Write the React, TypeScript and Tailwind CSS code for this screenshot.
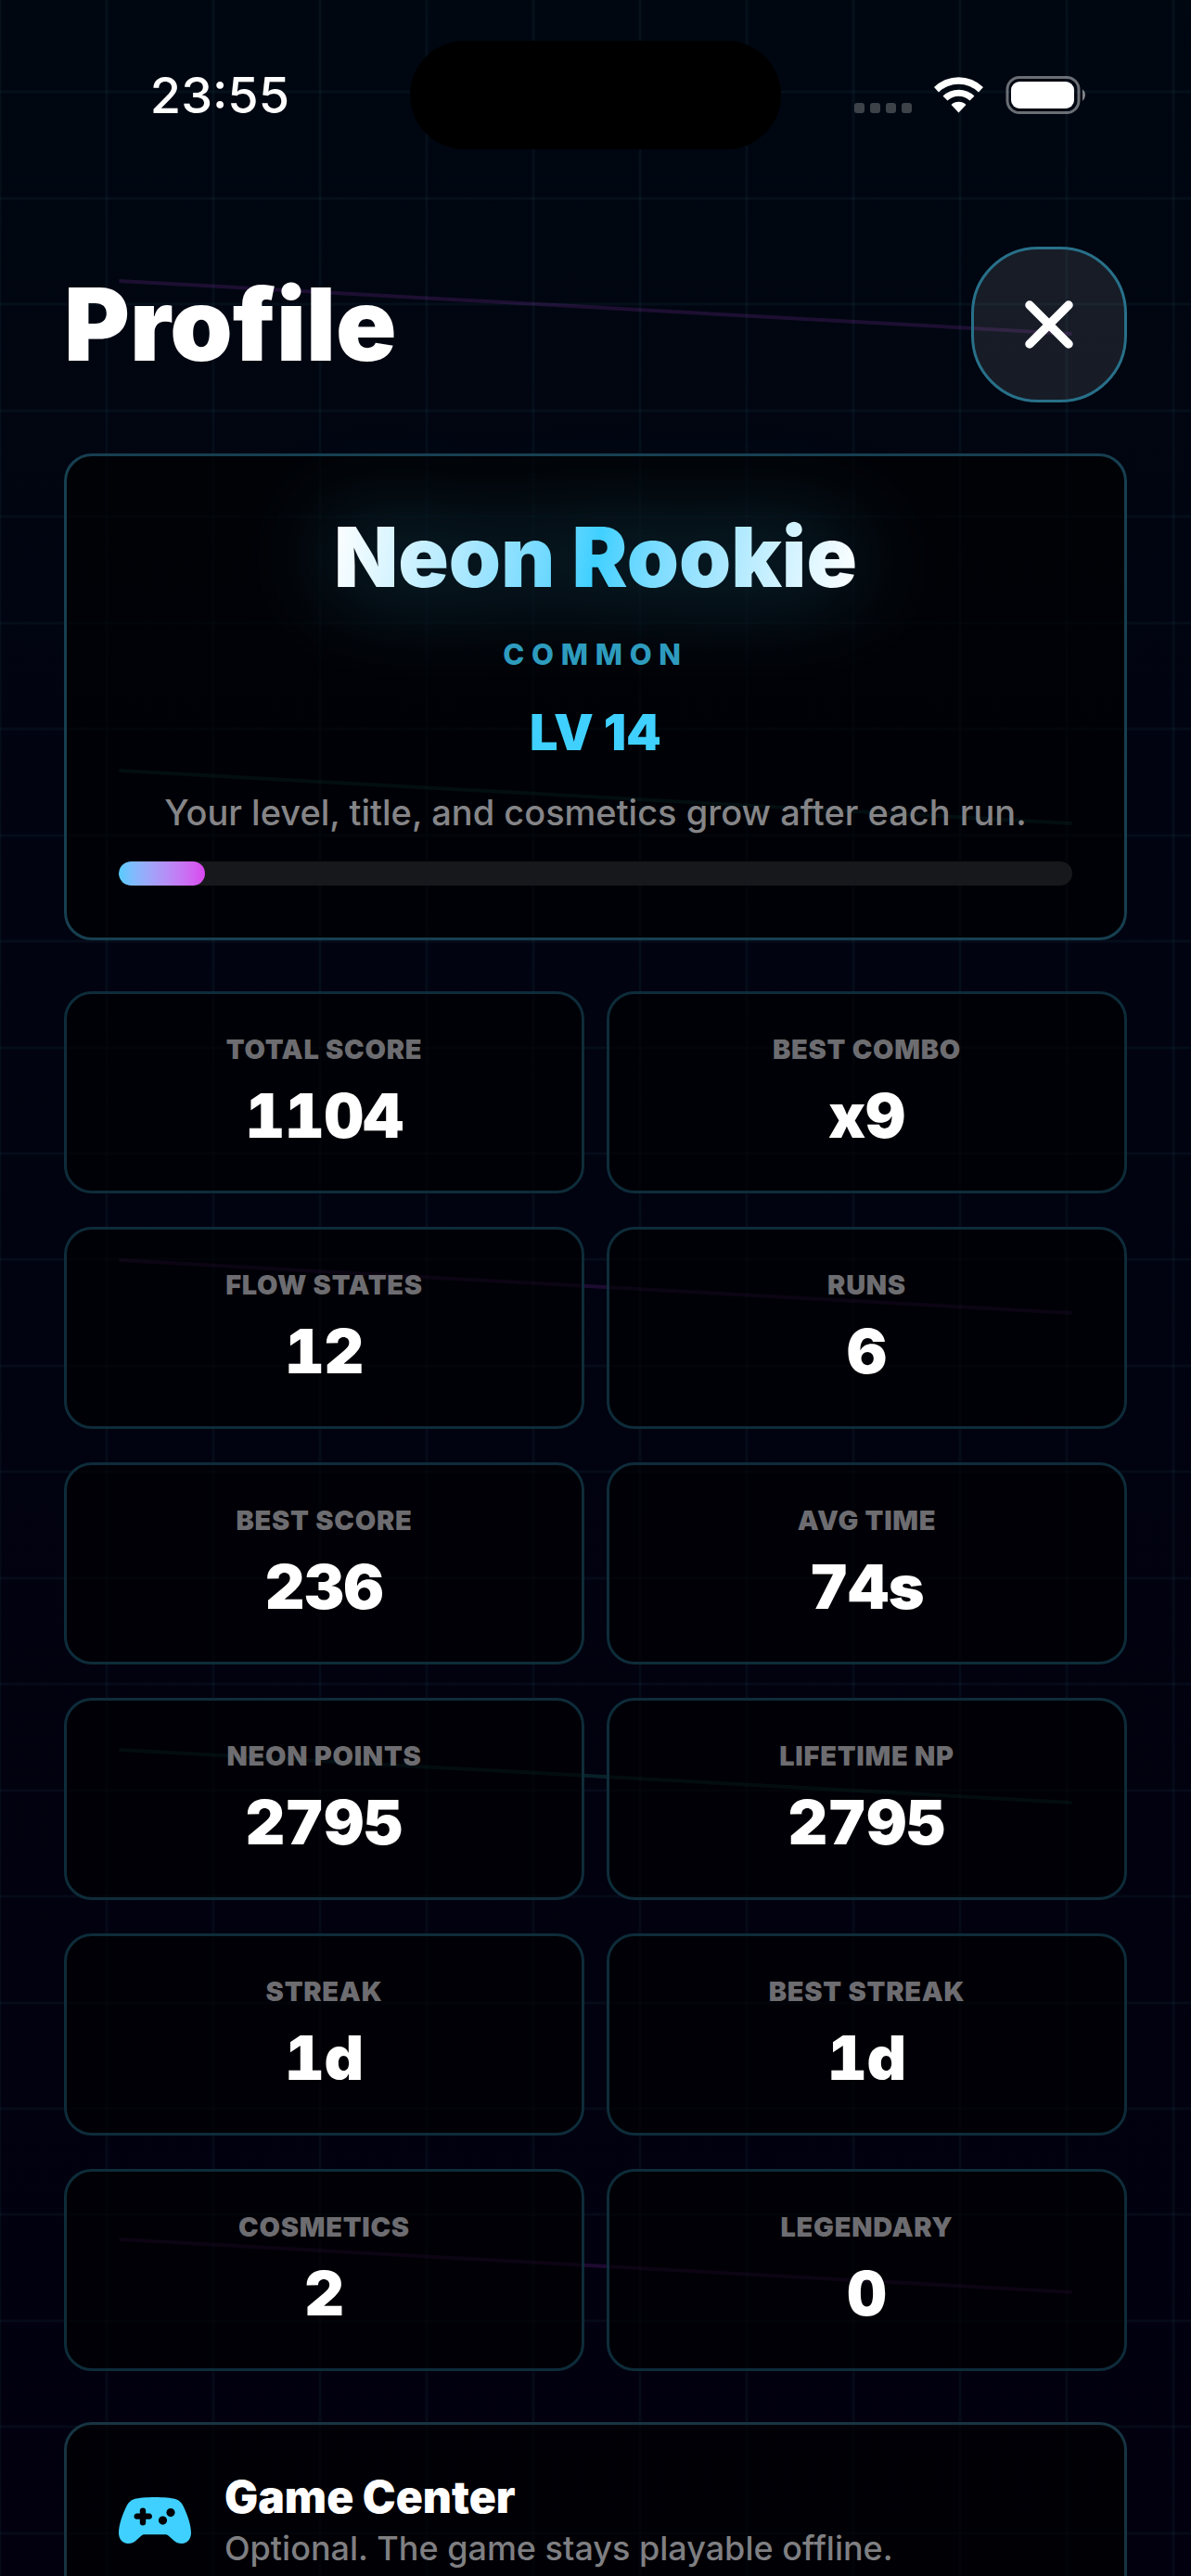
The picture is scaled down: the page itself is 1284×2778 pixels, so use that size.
type Stat = { label: string; value: string };

const STATS: Stat[] = [
  { label: "TOTAL SCORE", value: "1104" },
  { label: "BEST COMBO", value: "x9" },
  { label: "FLOW STATES", value: "12" },
  { label: "RUNS", value: "6" },
  { label: "BEST SCORE", value: "236" },
  { label: "AVG TIME", value: "74s" },
  { label: "NEON POINTS", value: "2795" },
  { label: "LIFETIME NP", value: "2795" },
  { label: "STREAK", value: "1d" },
  { label: "BEST STREAK", value: "1d" },
  { label: "COSMETICS", value: "2" },
  { label: "LEGENDARY", value: "0" },
];

const LEVEL_PROGRESS = 9;

// Faint grid with five slanted beams behind the whole screen
function NeonBackdrop() {
  const columns = Array.from({ length: 12 }, (_, i) => i * 115);
  const rows = Array.from({ length: 25 }, (_, i) => Math.round(i * 114.45 - 15));
  const beams = Array.from({ length: 5 }, (_, i) => 303 + i * 528);

  return (
    <svg className="absolute inset-0 h-full w-full" aria-hidden="true">
      {columns.map((x) => (
        <line key={x} x1={x} x2={x} y1="0" y2="100%" stroke="#5cc8dc" strokeOpacity="0.05" strokeWidth="3" />
      ))}
      {rows.map((y) => (
        <line key={y} x1="0" x2="100%" y1={y} y2={y} stroke="#5cc8dc" strokeOpacity="0.05" strokeWidth="3" />
      ))}
      {beams.map((y, i) => (
        <line
          key={y}
          x1="10%"
          x2="90%"
          y1={y}
          y2={y + 57}
          stroke={i % 2 === 0 ? "#c046f0" : "#2dd4bf"}
          strokeOpacity="0.15"
          strokeWidth="4"
        />
      ))}
    </svg>
  );
}

function StatusBar() {
  return (
    <div className="grid grid-cols-[1fr_400px_1fr] items-center pt-11">
      <time className="pl-8 text-center text-[54px] leading-[60px] font-medium">23:55</time>
      <div className="h-[117px] rounded-full bg-black" />
      <div className="flex items-center justify-center pr-8">
        <svg width="252" height="42" viewBox="0 0 252 42" fill="white" aria-hidden="true">
          {[0, 17, 34, 51].map((x) => (
            <rect key={x} x={x} y="29" width="11" height="11" rx="3" fillOpacity="0.24" />
          ))}
          <path d="M86 12A38 38 0 0 1 139 12L134 17.500A30.500 30.500 0 0 0 91 17.500Z" />
          <path d="M95.500 21.500A24.500 24.500 0 0 1 129.500 21.500L124.500 26.500A17.500 17.500 0 0 0 100.500 26.500Z" />
          <path d="M104.500 31A11.500 11.500 0 0 1 120.500 31L112.500 39.500Z" />
          <rect x="165" y="1.500" width="77" height="38" rx="13" fill="none" stroke="white" strokeOpacity="0.42" strokeWidth="3" />
          <rect x="169" y="6" width="68" height="29" rx="9" />
          <path d="M246 14a8.500 8.500 0 0 1 0 13Z" fillOpacity="0.5" />
        </svg>
      </div>
    </div>
  );
}

function ControllerIcon() {
  return (
    <svg width="78" height="50" viewBox="0 0 78 50" className="shrink-0" aria-hidden="true">
      <path
        fill="#3fd0ff"
        fillRule="evenodd"
        d="M39 0C48 0 57 0.800 61 2C65 3.200 67.500 5.500 69.500 9.500C74 18.500 78 30 78 38.500C78 45 74 50 68 50C64 50 61 48.500 58 45.500L53.500 41.500C52.500 40.500 51.500 40.200 50 40.200H28C26.500 40.200 25.500 40.500 24.500 41.500L20 45.500C17 48.500 14 50 10 50C4 50 0 45 0 38.500C0 30 4 18.500 8.500 9.500C10.500 5.500 13 3.200 17 2C21 0.800 30 0 39 0ZM26 11.500C24 11.500 22.800 12.800 22.800 14.500V17.500H19.500C17.800 17.500 16.500 18.800 16.500 20.700C16.500 22.500 17.800 23.700 19.500 23.700H22.800V27.500C22.800 29.300 24 30.500 26 30.500C28 30.500 29.200 29.300 29.200 27.500V23.700H33C34.700 23.700 36 22.500 36 20.700C36 18.800 34.700 17.500 33 17.500H29.200V14.500C29.200 12.800 28 11.500 26 11.500ZM56 12A4.600 4.600 0 1 0 56 21.200A4.600 4.600 0 1 0 56 12ZM47.500 20.500A4.600 4.600 0 1 0 47.500 29.700A4.600 4.600 0 1 0 47.500 20.500Z"
      />
    </svg>
  );
}

function LevelCard() {
  return (
    <section className="flex flex-col items-center gap-[30px] rounded-[30px] border-3 border-[#173f50] bg-black/60 px-14 pt-[55px] pb-14">
      <h2 className="bg-linear-100 from-white via-[#3fd0ff] to-white bg-clip-text text-[90px] leading-[108px] font-black text-transparent drop-shadow-[0_0_54px_rgba(63,208,255,0.4)]">
        Neon Rookie
      </h2>
      <p className="text-[31px] leading-[42px] font-extrabold tracking-[0.25em] text-[#2e9bbd]">COMMON</p>
      <p className="text-[54px] leading-[66px] font-black text-[#3fd0ff]">LV 14</p>
      <p className="text-[38px] leading-[46px] font-medium text-[#858588]">
        Your level, title, and cosmetics grow after each run.
      </p>
      <div
        className="h-[26px] w-full overflow-hidden rounded-full bg-[#17181b]"
        role="progressbar"
        aria-label="Level progress"
        aria-valuenow={LEVEL_PROGRESS}
        aria-valuemin={0}
        aria-valuemax={100}
      >
        <div
          className="h-full rounded-full bg-linear-to-r from-[#55ccff] to-[#d946ef]"
          style={{ width: `${LEVEL_PROGRESS}%` }}
        />
      </div>
    </section>
  );
}

function StatCard({ label, value }: Stat) {
  return (
    <div className="flex flex-col items-center gap-3.5 rounded-[30px] border-3 border-[#0e2c3a] bg-black/60 py-[42px]">
      <dt className="text-[29px] leading-9 font-black tracking-wide text-[#6d6d71]">{label}</dt>
      <dd className="text-[66px] leading-[78px] font-black tabular-nums">{value}</dd>
    </div>
  );
}

export default function App() {
  return (
    <div className="relative h-screen overflow-hidden bg-linear-to-b from-[#000711] to-[#02000e] font-['Inter','Liberation_Sans',sans-serif] text-white">
      <NeonBackdrop />

      <div className="relative">
        <StatusBar />

        <main className="flex flex-col gap-[55px] px-[69px] pt-[105px]">
          <header className="flex items-center justify-between">
            <h1 className="text-[108px] leading-[120px] font-black">Profile</h1>
            <button
              type="button"
              aria-label="Close"
              className="flex size-[168px] items-center justify-center rounded-[72px] border-3 border-[#287089] bg-white/9"
            >
              <svg width="52" height="52" viewBox="0 0 52 52" stroke="white" strokeWidth="9.500" strokeLinecap="round" aria-hidden="true">
                <path d="M5 5L47 47M47 5L5 47" />
              </svg>
            </button>
          </header>

          <LevelCard />

          <dl className="grid grid-cols-2 gap-x-6 gap-y-9">
            {STATS.map((stat) => (
              <StatCard key={stat.label} {...stat} />
            ))}
          </dl>

          <section className="flex items-center gap-9 rounded-[30px] border-3 border-[#173442] bg-black/60 px-14 py-12">
            <ControllerIcon />
            <div>
              <h3 className="text-[48px] leading-[60px] font-black">Game Center</h3>
              <p className="text-[36px] leading-[50px] font-medium text-[#7f7f82]">
                Optional. The game stays playable offline.
              </p>
            </div>
          </section>
        </main>
      </div>
    </div>
  );
}
